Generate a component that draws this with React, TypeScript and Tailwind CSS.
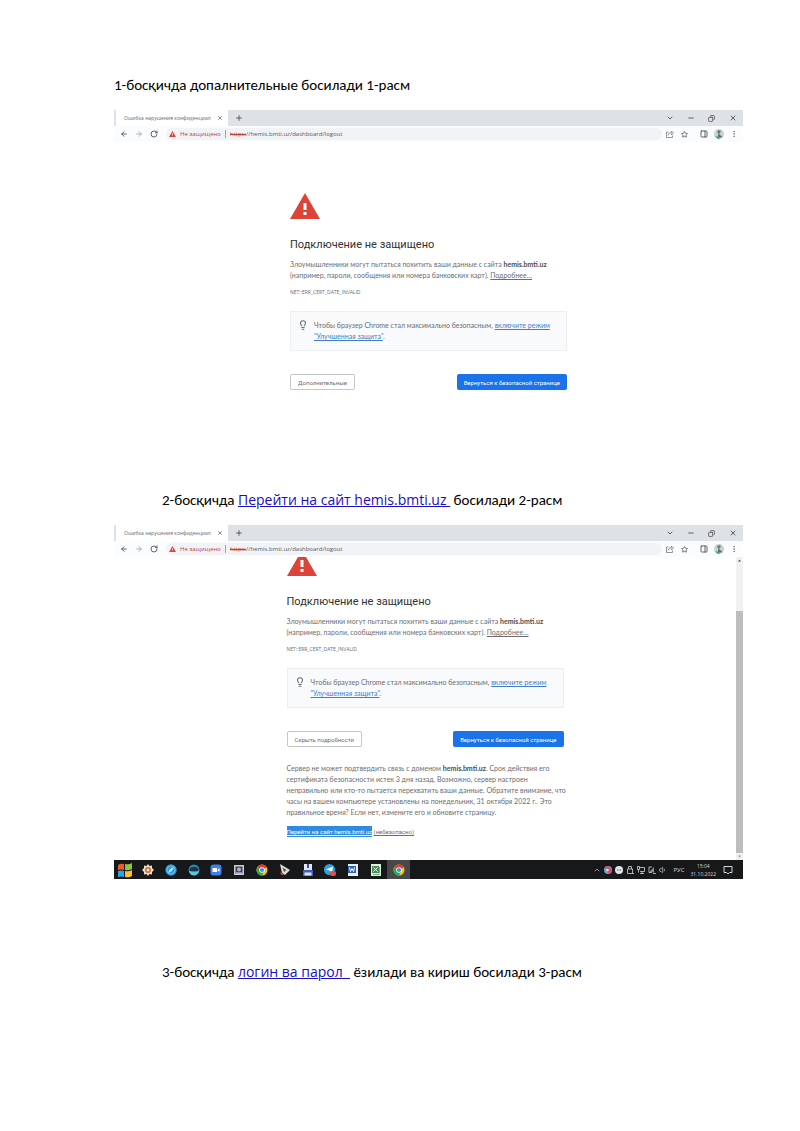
import type { ReactNode } from "react";
import {
    ArrowLeft,
    ArrowRight,
    ChevronDown,
    ChevronUp,
    Copy,
    EllipsisVertical,
    Lightbulb,
    LucideIcon,
    Minus,
    PanelRight,
    Plus,
    RotateCw,
    Star,
    Volume1,
    X,
} from "lucide-react";

type StepProps = {
    indent?: boolean;
    children: ReactNode;
};

type IconButtonProps = {
    icon: LucideIcon;
    label: string;
    className?: string;
};

type App = {
    name: string;
    active?: boolean;
    icon: ReactNode;
};

function Step({ indent, children }: StepProps) {
    return (
        <p
            className={`font-[Carlito,Lato,sans-serif] text-[15px] leading-5 whitespace-pre-wrap text-black ${indent ? "pl-12" : ""}`}
        >
            {children}
        </p>
    );
}

function StepLink({ children }: { children: ReactNode }) {
    return (
        <a
            href="#"
            className="font-['Open_Sans','Noto_Sans',sans-serif] text-[14px] text-[#1a0dc4] underline"
        >
            {children}
        </a>
    );
}

function IconButton({ icon: Icon, label, className = "" }: IconButtonProps) {
    return (
        <button
            type="button"
            aria-label={label}
            className={`flex h-4 items-center justify-center text-[#45484c] ${className}`}
        >
            <Icon className="size-2" strokeWidth={2.5} />
        </button>
    );
}

function WarningTriangle({ className }: { className: string }) {
    return (
        <svg viewBox="0 0 30 26" className={className} aria-hidden="true">
            <path d="M15 0 30 26H0Z" fill="#db4437" />
            <path d="M13.5 10h3v7h-3zM13.5 19h3v3h-3z" fill="#fff" />
        </svg>
    );
}

function ShareButton() {
    return (
        <button type="button" aria-label="Поделиться" className="flex w-[15px] justify-center">
            <svg viewBox="0 0 16 16" className="size-2" fill="none" stroke="#7b7e82" strokeWidth="1.6">
                <path d="M5 4H1v11h12v-4" />
                <path d="M4 11q1-6 7-6V2l4 4-4 4V7" />
            </svg>
        </button>
    );
}

function Avatar() {
    return (
        <button type="button" aria-label="Профиль" className="flex w-[15px] justify-center">
            <svg viewBox="0 0 10 10" className="size-[10px]">
                <circle cx="5" cy="5" r="5" fill="#c9d1d3" />
                <path d="M3.5 1.500h3v2H5.500v2l2.500 2v1H4v-2l.5-2-1-1z" fill="#5c7274" />
                <path d="M1 7.500h3l2 2-2 .4z" fill="#27a98b" />
            </svg>
        </button>
    );
}

function TabStrip() {
    return (
        <div className="flex h-4 items-stretch bg-[#dee1e6] pl-[2px]">
            <div className="flex w-28 items-center bg-white pl-2">
                <span className="flex-1 overflow-hidden text-[5px] leading-4 whitespace-nowrap text-[#65686c]">
                    Ошибка нарушения конфиденциал
                </span>
                <IconButton icon={X} label="Закрыть вкладку" className="w-4 [&>svg]:size-[6px]" />
            </div>
            <IconButton icon={Plus} label="Новая вкладка" className="w-[22px]" />
            <div className="ml-auto flex">
                <IconButton icon={ChevronDown} label="Поиск вкладок" className="w-[21px]" />
                <IconButton icon={Minus} label="Свернуть" className="w-[21px]" />
                <IconButton icon={Copy} label="Восстановить" className="w-[21px] [&>svg]:size-[7px] [&>svg]:-scale-x-100" />
                <IconButton icon={X} label="Закрыть" className="w-[21px]" />
            </div>
        </div>
    );
}

function Toolbar({ id }: { id: string }) {
    return (
        <div className="flex h-4 items-center bg-[#fbfcfd]">
            <div className="flex pl-[2px]">
                <IconButton icon={ArrowLeft} label="Назад" className="w-4" />
                <IconButton icon={ArrowRight} label="Вперёд" className="w-[14px] opacity-50" />
                <IconButton icon={RotateCw} label="Обновить" className="w-4" />
            </div>
            <div className="ml-1 flex h-3 flex-1 items-center rounded-full bg-[#f1f4f7] pl-[3px] text-[6px]">
                <WarningTriangle className="mr-1 h-[6px] w-[7px]" />
                <span className="text-[#c5413a]">Не защищено</span>
                <span className="mx-1 h-2 w-px bg-[#d98b86]" />
                <label htmlFor={id} className="text-[#c5413a] line-through">
                    https:
                </label>
                <input
                    id={id}
                    defaultValue="//hemis.bmti.uz/dashboard/logout"
                    className="min-w-0 flex-1 bg-transparent text-[#55585c] outline-none"
                />
            </div>
            <div className="flex items-center pr-[2px]">
                <ShareButton />
                <IconButton icon={Star} label="Добавить в закладки" className="w-[15px] [&>svg]:size-[7px]" />
                <IconButton icon={PanelRight} label="Боковая панель" className="ml-1 w-[15px]" />
                <Avatar />
                <IconButton icon={EllipsisVertical} label="Меню" className="w-[15px] opacity-70" />
            </div>
        </div>
    );
}

function SecurityWarning({ expanded }: { expanded?: boolean }) {
    return (
        <main className="mx-auto w-full max-w-[277px] font-[Lato,Roboto,sans-serif] text-[7px] leading-[11px] text-[#6a6d71]">
            <WarningTriangle className="h-[26px] w-[30px]" />
            <h1 className="mt-[18px] font-[Roboto,sans-serif] text-[11px] leading-4 text-[#303134]">
                Подключение не защищено
            </h1>
            <p className="mt-[6px]">
                Злоумышленники могут пытаться похитить ваши данные с сайта{" "}
                <b className="text-[#4b4e52]">hemis.bmti.uz</b>
                <br />
                (например, пароли, сообщения или номера банковских карт).{" "}
                <a href="#" className="underline">
                    Подробнее…
                </a>
            </p>
            <p className="mt-[6px] font-['Open_Sans',sans-serif] text-[5px] leading-[11px]">
                NET::ERR_CERT_DATE_INVALID
            </p>
            <div className="mt-[13px] flex gap-[6px] border border-[#eceff2] bg-[#f8fafc] px-[7px] py-2">
                <Lightbulb className="size-[10px] shrink-0" strokeWidth={2.5} />
                <p className="whitespace-nowrap">
                    Чтобы браузер Chrome стал максимально безопасным,{" "}
                    <a href="#" className="text-[#3f7fca] underline">
                        включите режим
                        <br />
                        "Улучшенная защита"
                    </a>
                    .
                </p>
            </div>
            <div className="mt-[23px] flex justify-between font-[Roboto,sans-serif] text-[6px]">
                <button
                    type="button"
                    className="h-4 rounded-xs border border-[#c3c6ca] px-[7px]"
                >
                    {expanded ? "Скрыть подробности" : "Дополнительные"}
                </button>
                <button
                    type="button"
                    className="h-4 rounded-xs bg-[#1a73e8] px-[7px] text-white"
                >
                    Вернуться к безопасной странице
                </button>
            </div>
            {expanded && (
                <>
                    <p className="mt-4 whitespace-nowrap">
                        Сервер не может подтвердить связь с доменом{" "}
                        <b className="text-[#4b4e52]">hemis.bmti.uz</b>. Срок действия его
                        <br />
                        сертификата безопасности истек 3 дня назад. Возможно, сервер настроен
                        <br />
                        неправильно или кто-то пытается перехватить ваши данные. Обратите внимание, что
                        <br />
                        часы на вашем компьютере установлены на понедельник, 31 октября 2022 г.. Это
                        <br />
                        правильное время? Если нет, измените его и обновите страницу.
                    </p>
                    <p className="mt-2 font-[Roboto,sans-serif] text-[6px]">
                        <a href="#" className="inline-block bg-[#2f8be0] text-white underline">
                            Перейти на сайт hemis.bmti.uz
                        </a>{" "}
                        <a href="#" className="underline">
                            (небезопасно)
                        </a>
                    </p>
                </>
            )}
        </main>
    );
}

function ScrollBar() {
    return (
        <div className="flex w-[7px] flex-col items-center bg-[#f1f1f1]">
            <svg viewBox="0 0 7 7" className="size-[7px]">
                <path d="M2 4.5 3.5 2.5 5 4.5z" fill="#505050" />
            </svg>
            <div className="mt-[47px] w-full flex-1 bg-[#bdbdbd]" />
            <svg viewBox="0 0 7 7" className="size-[7px]">
                <path d="M2 2.5 3.5 4.5 5 2.5z" fill="#909090" />
            </svg>
        </div>
    );
}

function ChromeLogo() {
    return (
        <svg viewBox="0 0 24 24" className="size-3">
            <circle cx="12" cy="12" r="11" fill="#fbc116" />
            <path d="M12 12 2.5 6.5A11 11 0 0 1 21.5 6.5Z" fill="#e33b2e" />
            <path d="M12 1a11 11 0 0 1 9.5 5.5H12Z" fill="#e33b2e" />
            <path d="M2.5 6.5A11 11 0 0 0 12 23l4-9-4-2Z" fill="#2da94f" />
            <circle cx="12" cy="12" r="5.5" fill="#fff" />
            <circle cx="12" cy="12" r="4.2" fill="#4285f4" />
        </svg>
    );
}

const apps: App[] = [
    {
        name: "Пуск",
        icon: (
            <svg viewBox="0 0 16 16" className="size-4">
                <path d="M1 3q3-2 6-1v6q-3-1-6 0z" fill="#f0592a" />
                <path d="M8 2q4 1 7-1v6q-3 2-7 1z" fill="#8bc53f" />
                <path d="M1 9q3-1 6 0v6q-3-1-6 0z" fill="#2ba6de" />
                <path d="M8 9q4 1 7-1v6q-3 2-7 1z" fill="#fbc02d" />
            </svg>
        ),
    },
    {
        name: "Фото",
        icon: (
            <svg viewBox="0 0 12 12" className="size-3">
                <path
                    d="m6 0 1.5 2L10 1.500 10 4l2 2-2 2v2.500L7.500 10 6 12 4.500 10 2 10.500V8L0 6l2-2V1.500L4.500 2z"
                    fill="#e8dccb"
                />
                <circle cx="6" cy="6" r="3" fill="#d86f2c" />
                <circle cx="6" cy="6" r="1.3" fill="#fff" />
            </svg>
        ),
    },
    {
        name: "Safari",
        icon: (
            <svg viewBox="0 0 12 12" className="size-3">
                <circle cx="6" cy="6" r="5.7" fill="#2c9be2" />
                <circle cx="6" cy="6" r="4" fill="none" stroke="#8ed0f5" strokeWidth=".6" />
                <path d="m9 3-2.300 4L3 9l2.300-4z" fill="#d9f0fc" />
            </svg>
        ),
    },
    {
        name: "Браузер",
        icon: (
            <svg viewBox="0 0 12 12" className="size-3">
                <circle cx="6" cy="6" r="5.500" fill="#2d86b4" />
                <path d="M1.500 4.500Q6 1 10.500 4.500L10 7H2z" fill="#173748" />
                <path d="M1 7q5 2 10 0-1 4-5 4.500Q2 11 1 7" fill="#62c5d0" />
            </svg>
        ),
    },
    {
        name: "Zoom",
        icon: (
            <svg viewBox="0 0 12 12" className="size-3">
                <rect x=".5" y=".5" width="11" height="11" rx="3" fill="#3f7fe8" />
                <path d="M2.500 4h4.500v4H2.500zM7.500 5.500l2-1.300v3.600l-2-1.300z" fill="#fff" />
            </svg>
        ),
    },
    {
        name: "Сканер",
        icon: (
            <svg viewBox="0 0 12 12" className="size-3">
                <rect x="1" y="1" width="10" height="10" fill="#c9ccd4" />
                <rect x="2.500" y="2.500" width="7" height="7" fill="#3d4251" />
                <circle cx="6" cy="5.500" r="2" fill="#a9b4cf" />
                <path d="M3 8.500h6v1H3z" fill="#e8e8ee" />
            </svg>
        ),
    },
    { name: "Chrome", icon: <ChromeLogo /> },
    {
        name: "Редактор",
        icon: (
            <svg viewBox="0 0 12 12" className="size-3">
                <path d="m1 0 10 6-5 5-3-2z" fill="#dcdcd6" />
                <path d="m3.500 3.500 4 2.500-2.500 2z" fill="#57544f" />
                <path d="m1 8 4 3H2z" fill="#c84b39" />
            </svg>
        ),
    },
    {
        name: "Total Commander",
        icon: (
            <svg viewBox="0 0 12 12" className="size-3">
                <path d="M1 6h10v6H1z" fill="#3f5cc4" />
                <path d="M2 0h8v6H2z" fill="#e4e7f4" />
                <path d="M5 0h2v4H5z" fill="#3450b5" />
                <path d="M2.500 8.500h7v3h-7z" fill="#dfe4f8" />
            </svg>
        ),
    },
    {
        name: "Telegram",
        icon: (
            <svg viewBox="0 0 12 12" className="size-3">
                <circle cx="5.500" cy="5.500" r="5.500" fill="#2ca3df" />
                <path d="m2 5.500 7-3-1 6-2.500-2z" fill="#fff" />
                <rect x="6" y="7" width="6" height="5" rx="2" fill="#e2503f" />
            </svg>
        ),
    },
    {
        name: "Word",
        icon: (
            <svg viewBox="0 0 12 12" className="size-3">
                <path d="M1 0h10v12H1z" fill="#e6effb" />
                <path d="M1 2h8v7H1z" fill="#2b63b8" />
                <path d="m2.500 3.500 1 4 1.500-3 1.500 3 1-4" fill="none" stroke="#fff" />
            </svg>
        ),
    },
    {
        name: "Excel",
        icon: (
            <svg viewBox="0 0 12 12" className="size-3">
                <path d="M1 0h10v12H1z" fill="#dff0dc" />
                <path d="M2 2h7v7H2z" fill="#3b9550" />
                <path d="m3.500 3.500 4 4m0-4-4 4" stroke="#fff" />
                <path d="M9.500 3v6M3 10.500h7" stroke="#6fb47a" />
            </svg>
        ),
    },
    { name: "Chrome", icon: <ChromeLogo />, active: true },
];

function Taskbar() {
    return (
        <footer className="flex h-[19px] items-stretch bg-[#17181a] text-[#d5d6d8]">
            <div className="flex w-[296px]">
                {apps.map(({ name, icon, active }, i) => (
                    <button
                        type="button"
                        key={i}
                        aria-label={name}
                        className={`flex flex-1 items-center justify-center ${active ? "bg-[#46484a]" : ""}`}
                    >
                        {icon}
                    </button>
                ))}
            </div>
            <div className="ml-auto flex items-center gap-[3px] pr-[10px] text-[6px] leading-2">
                <ChevronUp className="size-2" />
                <svg viewBox="0 0 8 8" className="size-2">
                    <circle cx="4" cy="4" r="4" fill="#51b5bd" />
                    <path d="M1 1a4 4 0 0 1 3-1l4 4a4 4 0 0 1-3 4z" fill="#d9486a" />
                    <circle cx="3.500" cy="4" r="1.300" fill="#dbe6f5" />
                </svg>
                <svg viewBox="0 0 8 8" className="size-2">
                    <circle cx="4" cy="4" r="4" fill="#e3e4e5" />
                    <path d="M2 3.500h1.500v1H2zM4.500 3.500H6v1H4.500z" fill="#55585a" />
                </svg>
                <svg viewBox="0 0 8 8" className="size-2" fill="none" stroke="currentColor" strokeWidth=".8">
                    <path d="M2.500 3V.5h3V3M1.500 3h5v4.500h-5zM6.500 7.500H8" />
                </svg>
                <svg viewBox="0 0 8 8" className="size-2" fill="none" stroke="currentColor" strokeWidth=".8">
                    <path d="M2 1.500h5.500v4H3M5 5.500v2M3 7.500h4M.5.500v3h2v-3zM1.500 3.500v3" />
                </svg>
                <svg viewBox="0 0 8 8" className="size-2">
                    <path d="M1 6.500 6 1v5.500z" fill="#8d8f91" />
                    <path d="M1 1h3M1 1v5.500h2.500M5 7.500h3" fill="none" stroke="currentColor" strokeWidth=".8" />
                </svg>
                <Volume1 className="size-2" />
                <span className="mx-[3px]">РУС</span>
                <time className="flex flex-col text-center text-[5px]">
                    <span>15:04</span>
                    <span>31.10.2022</span>
                </time>
                <svg viewBox="0 0 10 10" className="ml-1 size-[10px]" fill="none" stroke="currentColor">
                    <path d="M1 1.500h8v6H6.500L5 9 3.500 7.500H1z" />
                </svg>
            </div>
        </footer>
    );
}

export default function App() {
    return (
        <div className="min-h-screen bg-white pt-[75px] pr-[57px] pb-36 pl-[114px]">
            <Step>1-босқичда допалнительные босилади 1-расм</Step>

            <section className="mt-[15px] font-['Open_Sans','Noto_Sans',sans-serif]">
                <TabStrip />
                <Toolbar id="address-first" />
                <div className="pt-[51px] pb-[100px]">
                    <SecurityWarning />
                </div>
            </section>

            <Step indent>
                2-босқичда <StepLink>{"Перейти на сайт hemis.bmti.uz "}</StepLink>
                {" босилади 2-расм"}
            </Step>

            <section className="mt-[15px] font-['Open_Sans','Noto_Sans',sans-serif]">
                <TabStrip />
                <Toolbar id="address-second" />
                <div className="flex overflow-hidden">
                    <div className="-mt-[7px] flex-1 pb-[23px]">
                        <SecurityWarning expanded />
                    </div>
                    <ScrollBar />
                </div>
                <Taskbar />
            </section>

            <div className="mt-[83px]">
                <Step indent>
                    3-босқичда <StepLink>{"логин ва парол  "}</StepLink>
                    {" ёзилади ва кириш босилади 3-расм"}
                </Step>
            </div>
        </div>
    );
}
